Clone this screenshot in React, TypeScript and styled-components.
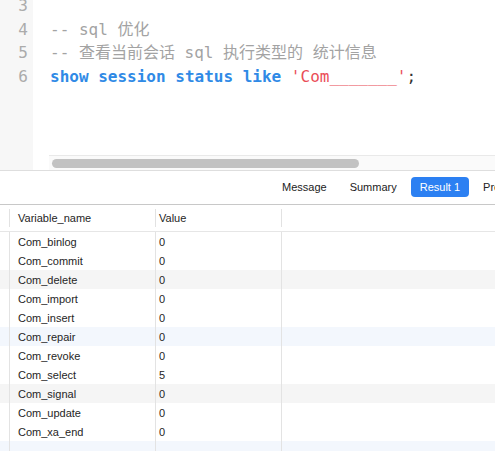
import styled, {createGlobalStyle} from 'styled-components';

const GlobalStyle = createGlobalStyle`
html, body {
  margin: 0;
  padding: 0;
  background: #ffffff;
  overflow: hidden;
}
`

const Page = styled.div`
display: flex;
flex-direction: column;
width: 495px;
height: 451px;
overflow: hidden;
background: #ffffff;
`

const Editor = styled.div`
display: flex;
height: 170px;
flex-shrink: 0;
`

const Gutter = styled.div`
width: 33px;
background: #f7f7f7;
padding-right: 5px;
box-sizing: border-box;
text-align: right;
font-family: "DejaVu Sans Mono", "Noto Sans CJK SC", monospace;
font-size: 16px;
line-height: 23.5px;
color: #ababab;
overflow: hidden;
`

const LineNo = styled.div`
&:first-child {
  margin-top: -6px;
}
`

const CodeArea = styled.div`
flex: 1;
display: flex;
flex-direction: column;
min-width: 0;
`

const Lines = styled.div`
flex: 1;
padding-left: 17px;
font-family: "DejaVu Sans Mono", "Noto Sans CJK SC", monospace;
font-size: 16px;
line-height: 23.5px;
white-space: pre;
overflow: hidden;
color: #333333;
`

const CodeLine = styled.div`
height: 23.5px;
&:first-child {
  margin-top: -6px;
}
`

const Comment = styled.span`
color: #a3a3a3;
`

const Keyword = styled.span`
color: #2f8ae6;
font-weight: bold;
`

const Str = styled.span`
color: #ea4d57;
`

const HScroll = styled.div`
height: 15px;
margin-left: 16px;
box-sizing: border-box;
border-top: 1px solid #e9e9e9;
background: #fafafa;
padding: 3px 0 0 3px;
`

const Thumb = styled.div`
width: 307px;
height: 9px;
border-radius: 5px;
background: #c2c2c2;
`

const TabBar = styled.div`
display: flex;
align-items: center;
height: 35px;
flex-shrink: 0;
box-sizing: border-box;
border-top: 1px solid #dedede;
border-bottom: 1px solid #c8c8c8;
padding-left: 273px;
overflow: hidden;
font-family: "Liberation Sans", Arial, sans-serif;
font-size: 11px;
`

const Tab = styled.div<{$active?: boolean}>`
flex-shrink: 0;
height: 20px;
line-height: 20px;
padding: 0 9px;
margin-right: 5px;
margin-top: -1px;
border-radius: 4px;
white-space: nowrap;
color: ${(p) => (p.$active ? '#ffffff' : '#222222')};
background: ${(p) => (p.$active ? '#2c80f2' : 'transparent')};
`

const Table = styled.div`
flex: 1;
font-family: "Liberation Sans", Arial, sans-serif;
font-size: 11px;
color: #252525;
overflow: hidden;
`

const HeaderRow = styled.div`
display: grid;
grid-template-columns: 10px 146px 126px 1fr;
height: 27px;
box-sizing: border-box;
border-bottom: 1px solid #e6e6e6;
`

const HeaderCell = styled.div<{$pad?: number}>`
display: flex;
align-items: center;
padding-left: ${(p) => p.$pad ?? 0}px;
position: relative;
&:not(:last-child)::after {
  content: '';
  position: absolute;
  right: 0;
  top: 4px;
  bottom: 4px;
  width: 1px;
  background: #e2e2e2;
}
`

const Row = styled.div<{$tint?: 'gray' | 'blue'}>`
display: grid;
grid-template-columns: 10px 146px 126px 1fr;
height: 19px;
background: ${(p) =>
  p.$tint === 'gray' ? '#f5f5f5' : p.$tint === 'blue' ? '#f3f7fd' : '#ffffff'};
`

const Cell = styled.div<{$pad?: number}>`
display: flex;
align-items: center;
padding-left: ${(p) => p.$pad ?? 0}px;
white-space: nowrap;
&:not(:last-child) {
  border-right: 1px solid #e3e3e3;
}
`

const rows: [string, string][] = [
  ['Com_binlog', '0'],
  ['Com_commit', '0'],
  ['Com_delete', '0'],
  ['Com_import', '0'],
  ['Com_insert', '0'],
  ['Com_repair', '0'],
  ['Com_revoke', '0'],
  ['Com_select', '5'],
  ['Com_signal', '0'],
  ['Com_update', '0'],
  ['Com_xa_end', '0'],
  ['', ''],
]

function tintFor(i: number): 'gray' | 'blue' | undefined {
  if (i % 3 !== 2) return undefined
  return Math.floor(i / 3) % 2 === 0 ? 'gray' : 'blue'
}

function App(): JSX.Element {
  return (
    <Page>
      <GlobalStyle />
      <Editor>
        <Gutter>
          {['3', '4', '5', '6'].map((n) => (
            <LineNo key={n}>{n}</LineNo>
          ))}
        </Gutter>
        <CodeArea>
          <Lines>
            <CodeLine> </CodeLine>
            <CodeLine>
              <Comment>-- sql 优化</Comment>
            </CodeLine>
            <CodeLine>
              <Comment>-- 查看当前会话 sql 执行类型的 统计信息</Comment>
            </CodeLine>
            <CodeLine>
              <Keyword>show</Keyword> <Keyword>session</Keyword> <Keyword>status</Keyword>{' '}
              <Keyword>like</Keyword> <Str>'Com_______'</Str>;
            </CodeLine>
          </Lines>
          <HScroll>
            <Thumb />
          </HScroll>
        </CodeArea>
      </Editor>
      <TabBar>
        <Tab>Message</Tab>
        <Tab>Summary</Tab>
        <Tab $active>Result 1</Tab>
        <Tab>Profile</Tab>
        <Tab>Status</Tab>
      </TabBar>
      <Table>
        <HeaderRow>
          <HeaderCell />
          <HeaderCell $pad={8}>Variable_name</HeaderCell>
          <HeaderCell $pad={3}>Value</HeaderCell>
          <HeaderCell />
        </HeaderRow>
        {rows.map(([name, value], i) => (
          <Row key={i} $tint={tintFor(i)}>
            <Cell />
            <Cell $pad={8}>{name}</Cell>
            <Cell $pad={3}>{value}</Cell>
            <Cell />
          </Row>
        ))}
      </Table>
    </Page>
  )
}

export default App;
